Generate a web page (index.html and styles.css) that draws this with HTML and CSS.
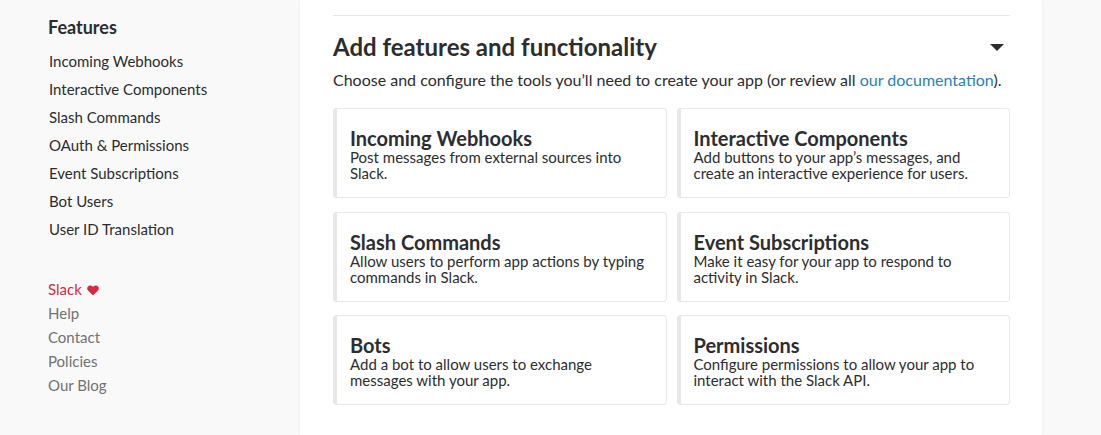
FILE: index.html
```html
<!DOCTYPE html>
<html lang="en">
<head>
<meta charset="utf-8">
<title>Add features and functionality</title>
<link rel="stylesheet" href="styles.css">
</head>
<body>
<div class="page">
  <aside class="sidebar">
    <h3 class="side-title">Features</h3>
    <ul class="side-nav">
      <li>Incoming Webhooks</li>
      <li>Interactive Components</li>
      <li>Slash Commands</li>
      <li>OAuth &amp; Permissions</li>
      <li>Event Subscriptions</li>
      <li>Bot Users</li>
      <li>User ID Translation</li>
    </ul>
    <ul class="side-footer">
      <li class="slack">Slack <svg class="heart" viewBox="0 0 12 11" width="12" height="11"><path d="M6 10.6 L1.2 5.8 C-0.2 4.4 0 2 1.6 1 C3 0.1 4.8 0.5 6 2 C7.2 0.5 9 0.1 10.4 1 C12 2 12.2 4.4 10.8 5.8 Z" fill="#d72b3f"/></svg></li>
      <li>Help</li>
      <li>Contact</li>
      <li>Policies</li>
      <li>Our Blog</li>
    </ul>
  </aside>
  <main class="main">
    <hr class="rule">
    <div class="head-row">
      <h2 class="heading">Add features and functionality</h2>
      <span class="caret"></span>
    </div>
    <p class="intro">Choose and configure the tools you’ll need to create your app (or review all <a class="link" href="#">our documentation</a>).</p>
    <div class="cards">
      <div class="card">
        <div class="card-title">Incoming Webhooks</div>
        <div class="card-desc">Post messages from external sources into Slack.</div>
      </div>
      <div class="card">
        <div class="card-title">Interactive Components</div>
        <div class="card-desc">Add buttons to your app’s messages, and create an interactive experience for users.</div>
      </div>
      <div class="card">
        <div class="card-title">Slash Commands</div>
        <div class="card-desc">Allow users to perform app actions by typing commands in Slack.</div>
      </div>
      <div class="card">
        <div class="card-title">Event Subscriptions</div>
        <div class="card-desc">Make it easy for your app to respond to activity in Slack.</div>
      </div>
      <div class="card">
        <div class="card-title">Bots</div>
        <div class="card-desc">Add a bot to allow users to exchange messages with your app.</div>
      </div>
      <div class="card">
        <div class="card-title">Permissions</div>
        <div class="card-desc">Configure permissions to allow your app to interact with the Slack API.</div>
      </div>
    </div>
  </main>
  <div class="rest"></div>
</div>
</body>
</html>
```
FILE: styles.css
```css
html, body {
  margin: 0;
  padding: 0;
  height: 100%;
}
body {
  font-family: Lato, "Open Sans", "Liberation Sans", sans-serif;
  color: #2c2d30;
  background: #f9f9f9;
  overflow: hidden;
}
.page {
  display: flex;
  height: 435px;
}
.sidebar {
  width: 300px;
  flex: 0 0 300px;
  box-sizing: border-box;
  padding: 15px 0 0 48px;
  background: #f9f9f9;
}
.side-title {
  margin: 0 0 8px 0;
  font-size: 18px;
  line-height: 24px;
  font-weight: 700;
  color: #2c2d30;
}
.side-nav, .side-footer {
  list-style: none;
  margin: 0;
  padding: 0;
}
.side-nav li {
  font-size: 15px;
  line-height: 28px;
  color: #2c2d30;
  padding-left: 1px;
}
.side-footer {
  margin-top: 34px;
}
.side-footer li {
  font-size: 15px;
  line-height: 24px;
  color: #717274;
}
.side-footer li.slack {
  color: #d72b3f;
}
.heart {
  vertical-align: -1px;
  margin-left: 1px;
}
.main {
  width: 742px;
  flex: 0 0 742px;
  box-sizing: border-box;
  padding: 15px 32px 0 33px;
  background: #fff;
  box-shadow: 0 0 3px rgba(0,0,0,0.07);
  position: relative;
}
.rule {
  margin: 0;
  border: 0;
  border-top: 1px solid #e8e8e8;
  height: 0;
}
.head-row {
  display: flex;
  justify-content: space-between;
  align-items: center;
  margin-top: 17px;
}
.heading {
  margin: 0;
  font-size: 24px;
  line-height: 27px;
  font-weight: 700;
  color: #2c2d30;
}
.caret {
  width: 0;
  height: 0;
  border-left: 7px solid transparent;
  border-right: 7px solid transparent;
  border-top: 7px solid #2c2d30;
  margin-right: 6px;
  margin-top: 1px;
}
.intro {
  margin: 9px 0 0 0;
  font-size: 16px;
  line-height: 22px;
  color: #2c2d30;
}
.link {
  color: #2a80b9;
  text-decoration: none;
}
.cards {
  display: grid;
  grid-template-columns: 1fr 1fr;
  column-gap: 10px;
  row-gap: 13.5px;
  margin-top: 17px;
}
.card {
  height: 90px;
  box-sizing: border-box;
  border: 1px solid #e8e8e8;
  border-left: 4px solid #e8e8e8;
  border-radius: 4px;
  padding: 18px 12px 0 13px;
}
.card-title {
  font-size: 20px;
  line-height: 22px;
  font-weight: 700;
  color: #2c2d30;
}
.card-desc {
  font-size: 15px;
  line-height: 16px;
  color: #2c2d30;
}
.rest {
  flex: 1;
  background: #f9f9f9;
}
```
